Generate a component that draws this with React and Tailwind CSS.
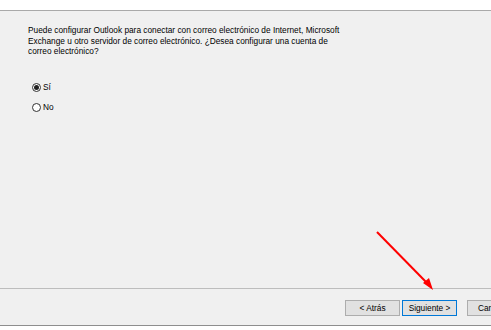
export default function App() {
  return (
    <div
      className="relative w-[491px] h-[330px] overflow-hidden bg-white flex flex-col text-[#000] text-[8.3px] leading-[10.5px]"
      style={{ fontFamily: '"Liberation Sans", Arial, sans-serif' }}
    >
      {/* top strip */}
      <div className="h-[11px] shrink-0 bg-white border-b border-[#a9a9a9]" />

      {/* body */}
      <div className="flex-1 bg-[#f0f0f0] flex flex-col pl-[28px] pt-[14px]">
        <p className="whitespace-nowrap">
          Puede configurar Outlook para conectar con correo electrónico de Internet, Microsoft
          <br />
          Exchange u otro servidor de correo electrónico. ¿Desea configurar una cuenta de
          <br />
          correo electrónico?
        </p>

        <div className="mt-[26px] flex flex-col gap-[10px] pl-[4px]">
          <label className="flex items-center gap-[2px] h-[10px]">
            <span className="w-[9px] h-[9px] rounded-full border border-[#333] bg-white flex items-center justify-center">
              <span className="w-[5px] h-[5px] rounded-full bg-[#222]" />
            </span>
            <span>Sí</span>
          </label>
          <label className="flex items-center gap-[2px] h-[10px]">
            <span className="w-[9px] h-[9px] rounded-full border border-[#333] bg-white" />
            <span>No</span>
          </label>
        </div>
      </div>

      {/* footer */}
      <div className="h-[37px] shrink-0 bg-[#f0f0f0] border-t border-[#bdbdbd] flex items-start pt-[11px] pl-[345px] gap-[2px]">
        <button className="w-[55px] h-[16px] shrink-0 bg-[#e1e1e1] border border-[#adadad] text-[8.3px] leading-none whitespace-nowrap">
          &lt; Atrás
        </button>
        <button className="w-[55px] h-[16px] shrink-0 bg-[#e1e1e1] border border-[#0078d7] text-[8.3px] leading-none whitespace-nowrap">
          Siguiente &gt;
        </button>
        <button className="ml-[8px] w-[55px] h-[16px] shrink-0 bg-[#e1e1e1] border border-[#adadad] text-[8.3px] leading-none whitespace-nowrap">
          Cancelar
        </button>
      </div>
      <div className="h-[5px] shrink-0 bg-white border-t border-[#8e8e8e]" />

      {/* annotation arrow */}
      <svg className="absolute left-0 top-0 pointer-events-none" width="491" height="330">
        <line x1="377" y1="232" x2="428" y2="284" stroke="#ff0000" strokeWidth="2" />
        <polygon points="433,290 423,283 429,278" fill="#ff0000" />
      </svg>
    </div>
  );
}
